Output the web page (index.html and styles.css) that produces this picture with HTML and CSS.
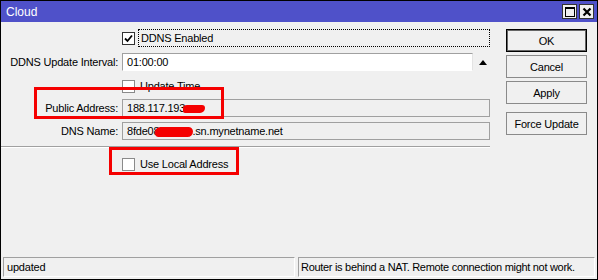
FILE: index.html
```html
<!DOCTYPE html>
<html lang="en">
<head>
    <meta charset="UTF-8">
    <title>Cloud</title>
    <link rel="stylesheet" href="styles.css">
</head>
<body>

<div class="window">
    <div class="titlebar">
        <span class="title">Cloud</span>
        <div class="title-buttons">
            <span class="tbtn">
                <svg width="12" height="12" viewBox="0 0 12 12"><rect x="1.5" y="1.5" width="9" height="9" fill="none" stroke="#000" stroke-width="1"/><line x1="1" y1="2" x2="11" y2="2" stroke="#000" stroke-width="2"/></svg>
            </span>
            <span class="tbtn">
                <svg width="12" height="12" viewBox="0 0 12 12"><path d="M2.5 2.5 L9.5 9.5 M9.5 2.5 L2.5 9.5" stroke="#000" stroke-width="2.2"/></svg>
            </span>
        </div>
    </div>

    <div class="main">
        <div class="form">
            <div class="row row-first">
                <span class="label"></span>
                <span class="check checked focused">
                    <svg width="9" height="9" viewBox="0 0 9 9"><path d="M1 4.5 L3.5 7 L8 1.5" fill="none" stroke="#000" stroke-width="1.8"/></svg>
                </span>
                <span class="check-text focus-ring">DDNS Enabled</span>
            </div>

            <div class="row">
                <span class="label">DDNS Update Interval:</span>
                <span class="field field-edit">01:00:00</span>
                <span class="arrow-up"></span>
            </div>

            <div class="row">
                <span class="label"></span>
                <span class="check"></span>
                <span class="check-text">Update Time</span>
            </div>

            <div class="row row-tight">
                <span class="label">Public Address:</span>
                <span class="field field-wide">188.117.193<span class="blot blot-ip"></span></span>
            </div>

            <div class="row row-dns">
                <span class="label">DNS Name:</span>
                <span class="field field-wide">8fde08<span class="blot blot-dns"></span>.sn.mynetname.net</span>
            </div>

            <div class="separator"></div>

            <div class="row row-last">
                <span class="label"></span>
                <span class="check"></span>
                <span class="check-text">Use Local Address</span>
            </div>
        </div>

        <div class="buttons">
            <button class="btn btn-default">OK</button>
            <button class="btn">Cancel</button>
            <button class="btn">Apply</button>
            <button class="btn btn-gap">Force Update</button>
        </div>
    </div>

    <div class="statusbar">
        <div class="panel panel-left">updated</div>
        <div class="panel panel-right">Router is behind a NAT. Remote connection might not work.</div>
    </div>

    <!-- annotations drawn over the dialog -->
    <div class="mark mark-address"></div>
    <div class="mark mark-local"></div>
</div>

</body>
</html>
```

FILE: styles.css
```css
* {
    margin: 0;
    padding: 0;
    box-sizing: border-box;
}
body {
    background: #f0f0f0;
    font-family: 'Liberation Sans', Arial, sans-serif;
    font-size: 11px;
    letter-spacing: -0.2px;
    color: #000;
}
.window {
    position: relative;
    width: 598px;
    height: 280px;
    border: 1px solid #000;
    background: #f0f0f0;
    display: flex;
    flex-direction: column;
}
.titlebar {
    height: 21px;
    background: #4f51c9;
    display: flex;
    align-items: center;
    justify-content: space-between;
    padding: 0 3px 0 5px;
}
.title {
    color: #fff;
    font-size: 12px;
    letter-spacing: 0;
}
.title-buttons {
    display: flex;
    gap: 2px;
}
.tbtn {
    width: 15px;
    height: 15px;
    background: #f0f0f0;
    border: 1px solid #333;
    display: flex;
    align-items: center;
    justify-content: center;
}
.main {
    flex: 1;
    display: flex;
    gap: 16px;
}
.form {
    width: 489px;
}
.row {
    display: flex;
    align-items: center;
    height: 18px;
    margin-top: 6px;
}
.row-first {
    margin-top: 7px;
}
.row-tight {
    margin-top: 4px;
}
.row-dns {
    margin-top: 5px;
}
.row-last {
    margin-top: 7px;
}
.label {
    width: 117px;
    margin-right: 4px;
    text-align: right;
    flex-shrink: 0;
}
.check {
    width: 13px;
    height: 13px;
    background: #fff;
    border: 1px solid #8a8a8a;
    display: flex;
    align-items: center;
    justify-content: center;
    flex-shrink: 0;
}
.check.focused {
    border-color: #333;
}
.check-text {
    margin-left: 3px;
    padding-left: 2px;
    line-height: 16px;
}
.focus-ring {
    flex: 1;
    height: 18px;
    border: 1px dotted #000;
}
.field {
    height: 18px;
    line-height: 16px;
    border: 1px solid #a0a0a0;
    padding-left: 4px;
    white-space: nowrap;
    overflow: hidden;
}
.field-edit {
    width: 351px;
    background: #fff;
    border-right-color: #e3e3e3;
    border-bottom-color: #fff;
}
.field-wide {
    flex: 1;
    background: #f0f0f0;
}
.arrow-up {
    margin-left: 6px;
    width: 0;
    height: 0;
    border-left: 4.5px solid transparent;
    border-right: 4.5px solid transparent;
    border-bottom: 5px solid #000;
}
.blot {
    display: inline-block;
    background: #f50000;
    vertical-align: middle;
}
.blot-ip {
    width: 22px;
    height: 8px;
    margin-left: -2px;
    border-radius: 4px 3px 5px 2px;
}
.blot-dns {
    width: 38px;
    height: 10px;
    margin-left: -4px;
    margin-right: -1px;
    border-radius: 6px 5px 6px 4px;
}
.separator {
    margin-top: 6px;
    height: 2px;
    border-top: 1px solid #a0a0a0;
    border-bottom: 1px solid #fff;
}
.buttons {
    width: 81px;
    display: flex;
    flex-direction: column;
}
.btn {
    height: 23px;
    margin-top: 3px;
    background: #f0f0f0;
    border: 1px solid #8a8a8a;
    font-family: inherit;
    font-size: 11px;
    letter-spacing: -0.2px;
    color: #000;
}
.btn-default {
    margin-top: 7px;
    border: 1px solid #000;
    box-shadow: inset 0 0 0 1px #666;
}
.btn-gap {
    margin-top: 8px;
}
.statusbar {
    display: flex;
    gap: 3px;
    padding: 0 2px 2px 2px;
}
.panel {
    height: 20px;
    line-height: 18px;
    border-top: 1px solid #a0a0a0;
    border-left: 1px solid #a0a0a0;
    border-right: 1px solid #fff;
    border-bottom: 1px solid #fff;
    white-space: nowrap;
    overflow: hidden;
}
.panel-left {
    width: 292px;
    padding-left: 3px;
}
.panel-right {
    flex: 1;
    padding-left: 2px;
    letter-spacing: -0.3px;
}
.mark {
    position: absolute;
    border: 3px solid #f50000;
}
.mark-address {
    left: 33px;
    top: 86px;
    width: 190px;
    height: 32px;
}
.mark-local {
    left: 108px;
    top: 146px;
    width: 130px;
    height: 28px;
}
```
